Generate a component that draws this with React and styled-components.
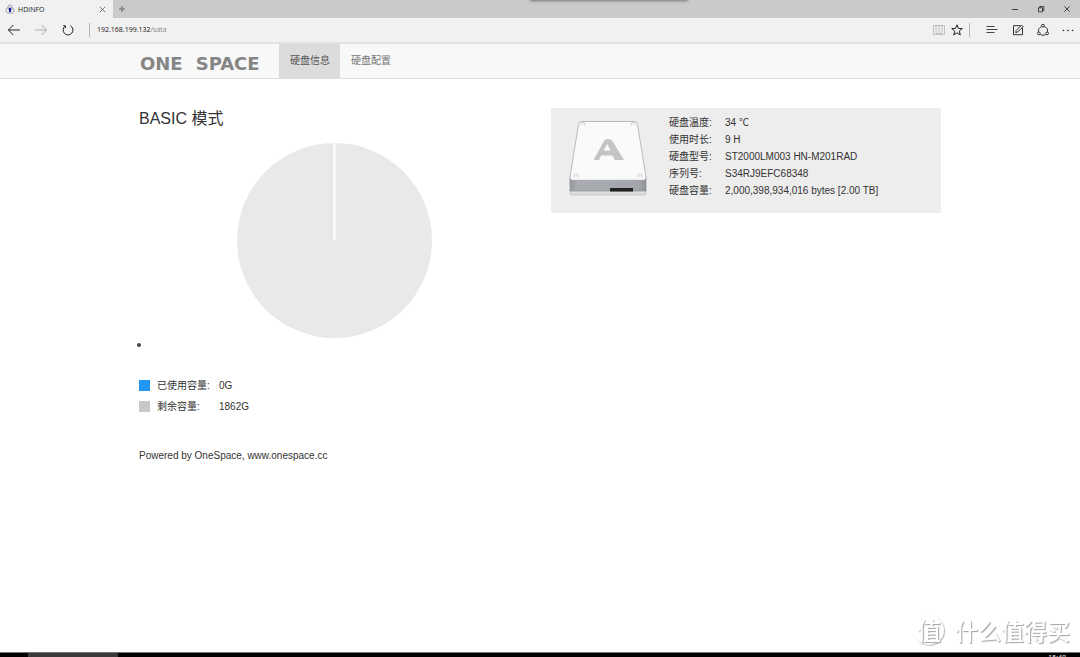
import React from "react";
import styled, { createGlobalStyle } from "styled-components";

const GlobalStyle = createGlobalStyle`
  * {
    box-sizing: border-box;
  }

  body {
    margin: 0;
    background: #fff;
    color: #333;
    font-family: "Liberation Sans", "Noto Sans CJK SC", sans-serif;
    font-size: 10px;
    line-height: 17px;
  }

  button {
    padding: 0;
    border: 0;
    background: none;
    font: inherit;
    color: inherit;
  }
`;

const Window = styled.div`
  display: flex;
  flex-direction: column;
  min-height: 100vh;
`;

const TitleBar = styled.div`
  position: relative;
  display: flex;
  align-items: stretch;
  height: 18px;
  background: #cacaca;
`;

const Tab = styled.div`
  display: flex;
  align-items: center;
  width: 113px;
  padding: 0 6px 0 5px;
  background: #f1f1f1;
`;

const TabTitle = styled.span`
  flex: 1;
  margin-left: 3px;
  font-family: "Open Sans", sans-serif;
  font-size: 7px;
  color: #222;
`;

const IconButton = styled.button`
  display: flex;
  align-items: center;
  justify-content: center;
  width: ${(props) => props.$width || 18}px;
  color: ${(props) => props.$color || "#222"};
`;

const WindowButtons = styled.div`
  display: flex;
  margin-left: auto;
`;

const TopShadow = styled.div`
  position: absolute;
  top: -4px;
  left: 50%;
  width: 156px;
  height: 4px;
  margin-left: -9px;
  box-shadow: 0 0 3px 1px #777;
`;

const Toolbar = styled.div`
  display: flex;
  align-items: center;
  height: 26px;
  border-bottom: 2px solid #e2e2e2;
  background: #f1f1f1;
`;

const Divider = styled.span`
  width: 1px;
  height: 14px;
  margin: 0 ${(props) => props.$right}px 0 ${(props) => props.$left}px;
  background: #b5b5b5;
`;

const Address = styled.a`
  flex: 1;
  padding-bottom: 2px;
  font-family: "Open Sans", sans-serif;
  font-size: 7px;
  color: #888;
  text-decoration: none;
`;

const Host = styled.span`
  color: #111;
`;

const Header = styled.header`
  border-bottom: 1px solid #e0e0e0;
  background: #f8f8f8;
`;

const Container = styled.div`
  width: 100%;
  max-width: 802px;
  margin: 0 auto;
`;

const Nav = styled(Container)`
  display: flex;
  height: 34px;
`;

const Logo = styled.a`
  display: flex;
  gap: 13px;
  width: 140px;
  padding: 8px 0 0 1px;
  font-family: "DejaVu Sans", sans-serif;
  font-size: 18px;
  font-weight: bold;
  line-height: 24px;
  color: #858585;
  text-decoration: none;
`;

const NavLink = styled.a`
  padding: 8px 10px 0 11px;
  background: ${(props) => (props.$active ? "#dcdcdc" : "transparent")};
  color: ${(props) => (props.$active ? "#555" : "#777")};
  text-decoration: none;
`;

const Content = styled(Container)`
  display: grid;
  grid-template-columns: 1fr 1fr;
  gap: 22px;
  align-items: start;
  padding-top: 29px;
`;

const Title = styled.h1`
  margin: 0;
  font-size: 16px;
  font-weight: normal;
  line-height: 22px;
`;

const Pie = styled.svg`
  display: block;
  width: 195px;
  height: 195px;
  margin: 13px auto 0;
`;

const Bullet = styled.div`
  width: 4px;
  height: 4px;
  margin: 5px 0 28px -2px;
  border-radius: 50%;
  background: #444;
`;

const LegendRow = styled.div`
  display: flex;
  align-items: center;
  height: 21px;
`;

const Swatch = styled.span`
  width: 11px;
  height: 11px;
  margin-right: 7px;
  background: ${(props) => props.$color};
`;

const LegendLabel = styled.span`
  width: 62px;
`;

const Footer = styled.footer`
  margin-top: 30px;
`;

const DiskPanel = styled.section`
  display: flex;
  padding: 6px 18px 14px;
  background: #ededed;
`;

const DiskIcon = styled.svg`
  flex: none;
  width: 80px;
  height: 78px;
  margin: 6px 20px 0 0;
`;

const DiskTable = styled.table`
  align-self: flex-start;
  border-collapse: collapse;

  th,
  td {
    height: 17px;
    padding: 0;
    font-weight: normal;
    text-align: left;
    white-space: nowrap;
  }

  th {
    width: 56px;
  }
`;

const Watermark = styled.div`
  position: fixed;
  right: 10px;
  bottom: 12px;
  display: flex;
  align-items: center;
  gap: 11px;
  color: #fff;
  font-family: "Noto Sans CJK SC", sans-serif;
  font-size: 23px;
  font-weight: 500;
  line-height: 30px;
  text-shadow: 1px 1px 1px #aaa, 1px 1px 1px #ccc;
`;

const Seal = styled.span`
  display: flex;
  align-items: center;
  justify-content: center;
  width: 30px;
  height: 30px;
  border-radius: 50%;
  font-size: 24px;
  box-shadow: 1px 1px 1px #bbb;
`;

const Taskbar = styled.div`
  display: flex;
  height: 5px;
  padding-left: 28px;
  margin-top: auto;
  overflow: hidden;
  border-top: 1px solid #777;
  background: #000;
`;

const TaskItem = styled.span`
  width: 90px;
  background: #3a3a3a;
`;

const Clock = styled.span`
  margin: 1px 14px 0 auto;
  font-family: "Open Sans", sans-serif;
  font-size: 7px;
  line-height: 7px;
  color: #fff;
`;

const slices = [
  { label: "已使用容量:", value: "0G", color: "#2196f3" },
  { label: "剩余容量:", value: "1862G", color: "#c8c8c8" },
];

const disk = [
  ["硬盘温度:", "34 ℃"],
  ["使用时长:", "9 H"],
  ["硬盘型号:", "ST2000LM003 HN-M201RAD"],
  ["序列号:", "S34RJ9EFC68348"],
  ["硬盘容量:", "2,000,398,934,016 bytes [2.00 TB]"],
];

const Icon = ({ size = 14, children }) => (
  <svg
    width={size}
    height={size}
    viewBox={`0 0 ${size} ${size}`}
    fill="none"
    stroke="currentColor"
    aria-hidden="true"
  >
    {children}
  </svg>
);

const BrowserTitle = () => (
  <TitleBar>
    <Tab>
      <Icon size={10}>
        <path d="M3 4V3a2 2 0 0 1 4 0v1M3 3.7A2.8 2.8 0 0 0 2.7 9h4.8A2.8 2.8 0 0 0 7 3.7" stroke="#889" strokeWidth=".8" />
        <circle cx="5" cy="5" r="1.5" fill="#1a1a99" stroke="none" />
        <path d="M4 5.5h2V8H4z" fill="#1a1a99" stroke="none" />
      </Icon>
      <TabTitle>HDINFO</TabTitle>
      <IconButton $width={9} $color="#555" aria-label="Close tab">
        <Icon size={7}>
          <path d="M.8.8l5.4 5.4M6.2.8L.8 6.2" strokeWidth=".8" />
        </Icon>
      </IconButton>
    </Tab>
    <IconButton $color="#666" aria-label="New tab">
      <Icon size={8}>
        <path d="M4 1v6M1 4h6" />
      </Icon>
    </IconButton>
    <TopShadow />
    <WindowButtons>
      <IconButton $width={26} aria-label="Minimize">
        <Icon size={8}>
          <path d="M1 4.5h6" strokeWidth=".8" />
        </Icon>
      </IconButton>
      <IconButton $width={26} aria-label="Restore">
        <Icon size={8}>
          <path d="M1.5 2.8h4v4h-4zM2.8 2.8V1.5h4v4H5.5" strokeWidth=".8" />
        </Icon>
      </IconButton>
      <IconButton $width={26} aria-label="Close">
        <Icon size={8}>
          <path d="M1.3 1.3l5.4 5.4M6.7 1.3L1.3 6.7" strokeWidth=".8" />
        </Icon>
      </IconButton>
    </WindowButtons>
  </TitleBar>
);

const BrowserToolbar = () => (
  <Toolbar>
    <IconButton $width={27} aria-label="Back">
      <Icon>
        <path d="M1.5 7h11.3M6.3 2L1.4 7l4.9 5" />
      </Icon>
    </IconButton>
    <IconButton $width={27} $color="#aaa" aria-label="Forward">
      <Icon>
        <path d="M1.2 7h11.3M7.7 2l4.9 5-4.9 5" />
      </Icon>
    </IconButton>
    <IconButton $width={27} aria-label="Refresh">
      <Icon>
        <path d="M4.3 3A4.9 4.9 0 1 0 9.5 2.8M2.3 2.6l2.2.3-.2 2.3" />
      </Icon>
    </IconButton>
    <Divider $left={8} $right={7} />
    <Address href="#sata">
      <Host>192.168.199.132</Host>/sata
    </Address>
    <IconButton $color="#bbb" aria-label="Reading view">
      <Icon>
        <path d="M1.5 2.5h11v9h-11zM4 2.5h2.2l.8.8.8-.8H10v8H7.8l-.8.8-.8-.8H4zM7 3.3v8" strokeWidth=".9" />
      </Icon>
    </IconButton>
    <IconButton aria-label="Favorites">
      <Icon>
        <path d="M7 1.8l1.4 3.6 3.9.2-3 2.5 1 3.8L7 9.8l-3.3 2.1 1-3.8-3-2.5 3.9-.2z" />
      </Icon>
    </IconButton>
    <Divider $left={3} $right={9} />
    <IconButton $width={26} $color="#444" aria-label="Hub">
      <Icon>
        <path d="M1.5 3.5h8M1.5 6.5h11M1.5 9.5h8" />
      </Icon>
    </IconButton>
    <IconButton $width={25} $color="#333" aria-label="Make a note">
      <Icon>
        <path d="M9.5 2.7h-7v9h9v-7M4.7 9.5l.5-2 5.4-5.4 1.5 1.5-5.4 5.4z" />
      </Icon>
    </IconButton>
    <IconButton $width={25} $color="#333" aria-label="Share">
      <Icon>
        <path d="M5.6 3.6A5 5 0 0 0 2.4 8.8M8.4 3.6a5 5 0 0 1 3.2 5.2M4.5 11.6a5 5 0 0 0 5 0" />
        <circle cx="7" cy="2.7" r="1.4" />
        <circle cx="2.9" cy="10.4" r="1.4" />
        <circle cx="11.1" cy="10.4" r="1.4" />
      </Icon>
    </IconButton>
    <IconButton $width={25} aria-label="More">
      <Icon>
        <g fill="currentColor" stroke="none">
          <circle cx="2.5" cy="7.5" r=".8" />
          <circle cx="7" cy="7.5" r=".8" />
          <circle cx="11.5" cy="7.5" r=".8" />
        </g>
      </Icon>
    </IconButton>
  </Toolbar>
);

const Disk = () => (
  <DiskIcon viewBox="0 0 80 78" aria-hidden="true">
    <defs>
      <linearGradient id="front" x1="0" x2="1" y1="0" y2="0">
        <stop offset="0" stopColor="#95999d" />
        <stop offset=".1" stopColor="#a9adb1" />
        <stop offset=".9" stopColor="#a3a7ab" />
        <stop offset="1" stopColor="#8d9195" />
      </linearGradient>
    </defs>
    <path d="M1 70h76v3q0 2-2 2H3q-2 0-2-2z" fill="#dcdddd" stroke="#bbb" strokeWidth=".6" />
    <path d="M1 58h76v13H1z" fill="url(#front)" stroke="#909090" strokeWidth=".7" />
    <path d="M12 1.5h54q2 0 2.4 2L77 57q.5 2-1.5 2h-73Q.5 59 1 57L9.6 3.5q.4-2 2.4-2z" fill="#fafafa" stroke="#bbb" />
    <path d="M2 59h74" stroke="#fff" strokeWidth="1.4" />
    <g fill="#f6f6f6" stroke="#bbb" strokeWidth=".8">
      <path d="M12 5.5a2 2 0 1 1 3.5 0M62.500 5.500a2 2 0 1 1 3.500 0M5.200 57a2.200 2.200 0 1 1 4 0M69 57a2.200 2.200 0 1 1 4 0" />
    </g>
    <path d="M24.500 40L35 21q1-1.700 3-1.700h2.500q2 0 2.900 1.700L55 40h-9.200l-2.300-4.500H32.300L30 40zM34.700 30.500h6.900L38.200 24z" fill="#c4c4c4" fillRule="evenodd" />
    <path d="M41 68h23v3.500H41z" fill="#222" />
  </DiskIcon>
);

export default () => {
  return (
    <Window>
      <GlobalStyle />
      <BrowserTitle />
      <BrowserToolbar />
      <Header>
        <Nav as="nav">
          <Logo href="#home">
            <span>ONE</span> <span>SPACE</span>
          </Logo>
          <NavLink href="#info" $active>硬盘信息</NavLink>
          <NavLink href="#config">硬盘配置</NavLink>
        </Nav>
      </Header>
      <Content as="main">
        <div>
          <Title>BASIC 模式</Title>
          <Pie viewBox="0 0 195 195" aria-hidden="true">
            <circle cx="97.5" cy="97.5" r="97.5" fill="#e9e9e9" />
            <path d="M97.5 0v97.5" stroke="#fff" strokeWidth="2" />
          </Pie>
          <Bullet />
          {slices.map((slice) => (
            <LegendRow key={slice.label}>
              <Swatch $color={slice.color} />
              <LegendLabel>{slice.label}</LegendLabel>
              <span>{slice.value}</span>
            </LegendRow>
          ))}
          <Footer>Powered by OneSpace, www.onespace.cc</Footer>
        </div>
        <DiskPanel>
          <Disk />
          <DiskTable>
            <tbody>
              {disk.map(([name, value]) => (
                <tr key={name}>
                  <th scope="row">{name}</th>
                  <td>{value}</td>
                </tr>
              ))}
            </tbody>
          </DiskTable>
        </DiskPanel>
      </Content>
      <Watermark>
        <Seal>值</Seal>
        <span>什么值得买</span>
      </Watermark>
      <Taskbar>
        <TaskItem />
        <Clock>15:48</Clock>
      </Taskbar>
    </Window>
  );
};
